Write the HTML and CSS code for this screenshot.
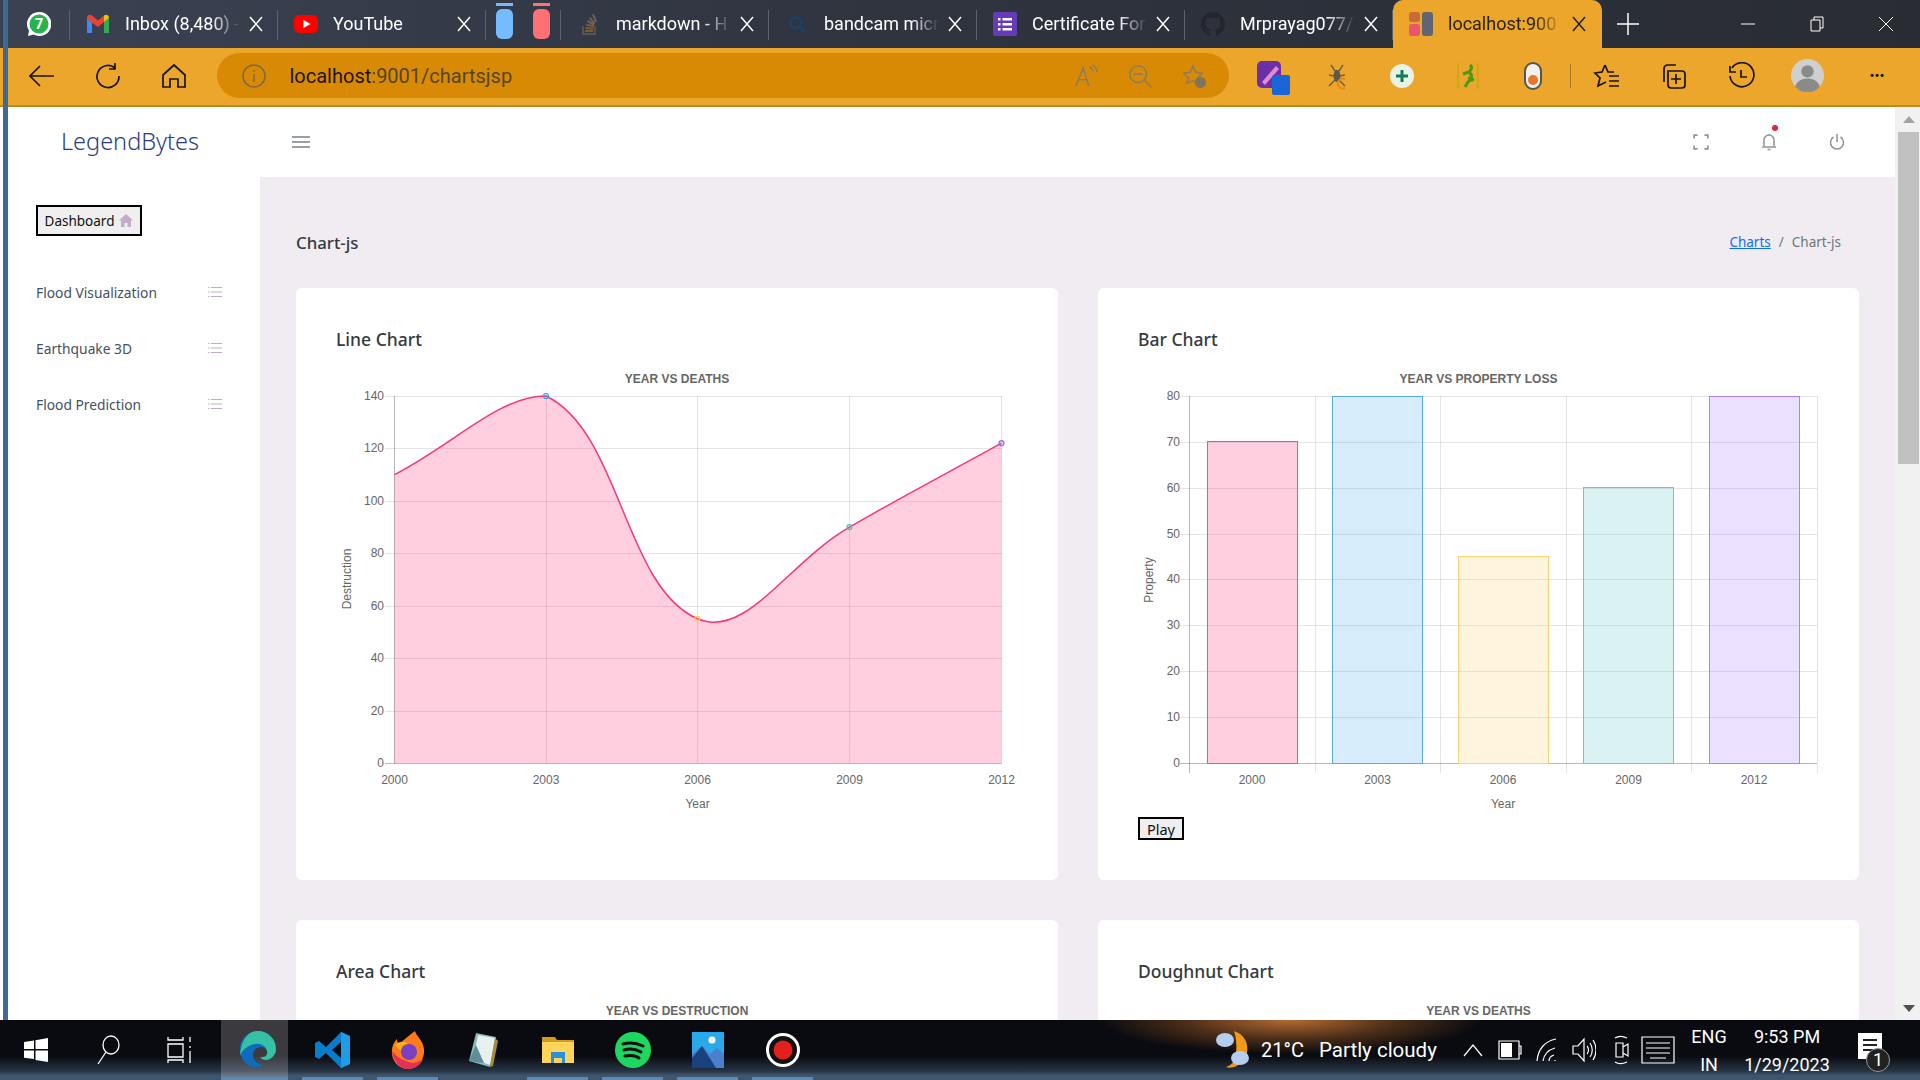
FILE: index.html
```html
<!DOCTYPE html>
<html lang="en">
<head>
    <meta charset="UTF-8">
    <title>localhost:9001/chartsjsp</title>
    <link rel="stylesheet" href="styles.css">
</head>
<body>
<div class="screen">
    <div class="edge-strip"></div>

    <!-- browser tabs -->
    <div class="tabstrip">
        <div class="tab pinned">
            <svg class="tab-icon" viewBox="0 0 24 24"><path fill="#fff" d="M12 0a12 12 0 0 0-10 18.500L1 24l5.600-1.500A12 12 0 1 0 12 0z"/><circle cx="12" cy="12" r="9.500" fill="#25b34a"/><text x="12" y="17" class="wa-num">7</text></svg>
        </div>
        <div class="tab">
            <svg class="tab-icon" viewBox="0 0 24 24"><path fill="#4285f4" d="M1 21V6l5 4v11z"/><path fill="#34a853" d="M18 21V10l5-4v15z"/><path fill="#ea4335" d="M1 6c0-3 3-4 5-2.500l6 5 6-5v6.500l-6 5-11-8z"/><path fill="#fbbc04" d="M18 3.500C20 2 23 3 23 6l-5 4z"/></svg>
            <span class="tab-title">Inbox (8,480) -</span>
            <svg class="tab-close" viewBox="0 0 14 16"><path d="M1 1l12 14M13 1L1 15"/></svg>
        </div>
        <div class="tab">
            <svg class="tab-icon" viewBox="0 0 24 24"><rect y="3" width="24" height="18" rx="5" fill="#f00"/><path fill="#fff" d="M9.500 8l7 4-7 4z"/></svg>
            <span class="tab-title">YouTube</span>
            <svg class="tab-close" viewBox="0 0 14 16"><path d="M1 1l12 14M13 1L1 15"/></svg>
        </div>
        <div class="tab pinned pills">
            <div class="pill pill-blue"></div>
            <div class="pill pill-red"></div>
        </div>
        <div class="tab">
            <svg class="tab-icon" viewBox="0 0 24 24"><path fill="#5c5148" d="M5 14h2v7h10v-7h2v9H5z"/><path fill="#7a5a3c" d="M8 18h8v2H8zM8.500 15l8 .8-.2 2-8-.8zM9.500 11.500l7.700 2.200-.5 1.900-7.700-2.200z"/><path fill="#6d6258" d="M11 8l6.800 4.200-1 1.700-6.800-4.200zM13.500 5l5 6.300-1.600 1.200-5-6.300zM17 2l3 7.400-1.900.8-3-7.400z"/></svg>
            <span class="tab-title">markdown - H</span>
            <svg class="tab-close" viewBox="0 0 14 16"><path d="M1 1l12 14M13 1L1 15"/></svg>
        </div>
        <div class="tab">
            <svg class="tab-icon" viewBox="-4 -4 32 32"><circle cx="10" cy="10" r="7" fill="none" stroke="#17446f" stroke-width="3"/><path d="M15 15l7 7" stroke="#17446f" stroke-width="3.500"/></svg>
            <span class="tab-title">bandcam micr</span>
            <svg class="tab-close" viewBox="0 0 14 16"><path d="M1 1l12 14M13 1L1 15"/></svg>
        </div>
        <div class="tab">
            <svg class="tab-icon" viewBox="0 0 24 24"><rect width="24" height="24" rx="2" fill="#673ab7"/><path fill="#fff" d="M5 6h2.500v2.500H5zM9.500 6H19v2.500H9.500zM5 11h2.500v2.500H5zM9.500 11H19v2.500H9.500zM5 16h2.500v2.500H5zM9.500 16H19v2.500H9.500z"/></svg>
            <span class="tab-title">Certificate For</span>
            <svg class="tab-close" viewBox="0 0 14 16"><path d="M1 1l12 14M13 1L1 15"/></svg>
        </div>
        <div class="tab">
            <svg class="tab-icon" viewBox="0 0 24 24"><path fill="#23262c" d="M12 0a12 12 0 0 0-3.800 23.400c.6.100.8-.3.800-.6v-2.200c-3.300.7-4-1.400-4-1.400-.5-1.400-1.300-1.800-1.300-1.800-1.100-.7.100-.7.100-.7 1.200.1 1.800 1.200 1.800 1.200 1.100 1.800 2.800 1.300 3.500 1 .1-.8.400-1.300.8-1.600-2.700-.3-5.500-1.300-5.500-5.900 0-1.300.5-2.400 1.200-3.200-.1-.3-.5-1.500.1-3.200 0 0 1-.3 3.300 1.200a11.500 11.500 0 0 1 6 0c2.300-1.500 3.300-1.200 3.300-1.200.7 1.700.2 2.900.1 3.200.8.800 1.200 1.900 1.200 3.200 0 4.600-2.800 5.600-5.500 5.900.4.400.8 1.100.8 2.200v3.300c0 .3.200.7.800.6A12 12 0 0 0 12 0z"/></svg>
            <span class="tab-title">Mrprayag077/</span>
            <svg class="tab-close" viewBox="0 0 14 16"><path d="M1 1l12 14M13 1L1 15"/></svg>
        </div>
        <div class="tab active">
            <svg class="tab-icon" viewBox="0 0 24 24"><rect x="0" y="0" width="11" height="10" rx="3" fill="#c96a3a"/><rect x="0" y="12" width="11" height="12" rx="3" fill="#e8556d"/><rect x="13" y="0" width="11" height="24" rx="3" fill="#5f6672"/></svg>
            <span class="tab-title">localhost:900</span>
            <svg class="tab-close" viewBox="0 0 14 16"><path d="M1 1l12 14M13 1L1 15"/></svg>
        </div>
        <div class="tab-new"><svg viewBox="0 0 24 24" width="24" height="24"><path d="M12 1v22M1 12h22"/></svg></div>
        <div class="win-controls">
            <div class="win-btn"><svg viewBox="0 0 16 16" width="16" height="16"><path d="M1 8h14"/></svg></div>
            <div class="win-btn"><svg viewBox="0 0 16 16" width="16" height="16"><path d="M2 4h9v11H2zM5 4V1h9v11h-3"/></svg></div>
            <div class="win-btn"><svg viewBox="0 0 16 16" width="16" height="16"><path d="M1 1l14 14M15 1L1 15"/></svg></div>
        </div>
    </div>

    <!-- browser toolbar -->
    <div class="toolbar">
        <div class="nav-btns">
            <div class="tool-btn"><svg viewBox="0 0 28 28"><path d="M26 14H3M12 4L2 14l10 10"/></svg></div>
            <div class="tool-btn"><svg viewBox="0 0 28 28"><path d="M21 6a11 11 0 1 0 4 8M21 1v6h-6"/></svg></div>
            <div class="tool-btn"><svg viewBox="0 0 28 28"><path d="M3 13L14 3l11 10v12h-7v-8h-8v8H3z"/></svg></div>
        </div>
        <div class="address">
            <svg class="info-icon" viewBox="0 0 26 26"><circle cx="13" cy="13" r="11"/><path d="M13 11v8M13 7v2"/></svg>
            <div class="url"><span class="url-host">localhost</span>:9001/chartsjsp</div>
            <div class="address-btns">
                <div class="tool-btn muted"><svg viewBox="0 0 28 28"><path d="M3 25L11 5l6 20M6 18h9M18 4c2 1 3 3 3 5M21 2c3 2 5 5 5 8"/></svg></div>
                <div class="tool-btn muted"><svg viewBox="0 0 28 28"><circle cx="12" cy="12" r="9"/><path d="M7 12h10M19 19l7 7"/></svg></div>
                <div class="tool-btn muted"><svg viewBox="0 0 28 28"><path d="M13 3l3 7 7 1-5 5 1 6-6-3-7 3 2-6-5-5 7-1z"/><circle class="solid" cx="21" cy="21" r="6"/></svg></div>
            </div>
        </div>
        <div class="ext-btns">
            <div class="ext"><svg viewBox="-5 -4 41 40" width="41" height="40"><rect x="1" y="1" width="24" height="27" rx="5" fill="#6b2fa8"/><path d="M6 22L20 6l3 3L9 25z" fill="#e58ad0"/><rect x="16" y="15" width="18" height="20" rx="2" fill="#1a66d6"/></svg></div>
            <div class="ext"><svg viewBox="0 0 28 28" width="28" height="28"><path d="M8 3l4 6h4l4-6M6 13l5 1M22 13l-5 1M6 24l6-6M22 24l-6-6" stroke="#6b6450" stroke-width="1.500" fill="none"/><ellipse cx="14" cy="14" rx="3.500" ry="6" fill="#5f5a48"/><path d="M22 17a5 5 0 1 0 0 9" stroke="#e58a16" stroke-width="2" fill="none"/></svg></div>
            <div class="ext"><svg viewBox="0 0 26 26" width="26" height="26"><circle cx="13" cy="13" r="12" fill="#e9f2e6"/><path d="M13 7v12M7 13h12" stroke="#0c7c59" stroke-width="3"/></svg></div>
            <div class="ext"><svg viewBox="0 0 26 28" width="26" height="28"><path d="M5 2h-2v24h2M21 2h2v24h-2" stroke="#b5a800" fill="none"/><path d="M15 3c3 2 1 5-1 7 4 3 3 8-1 10l-3 5M14 10l-6 2M13 16l6 2" stroke="#4c9a12" stroke-width="3" fill="none"/></svg></div>
            <div class="ext"><svg viewBox="0 0 20 30" width="20" height="30"><rect x="2" y="2" width="16" height="26" rx="8" fill="#f4efe8" stroke="#555" stroke-width="2"/><circle cx="10" cy="19" r="5" fill="#e8772a"/></svg></div>
        </div>
        <div class="tool-sep"></div>
        <div class="user-btns">
            <div class="tool-btn"><svg viewBox="0 0 28 28"><path d="M12 3l3 7h6M12 3l-3 7-7 1 5 5-2 8 8-4M16 14h10M16 19h10M16 24h10"/></svg></div>
            <div class="tool-btn"><svg viewBox="0 0 28 28"><path d="M4 20V7c0-3 2-4 4-4h8M8 9h14c2 0 3 1 3 3v11c0 2-1 3-3 3H11c-2 0-3-1-3-3zM16 12v10M11 17h10"/></svg></div>
            <div class="tool-btn"><svg viewBox="0 0 28 28"><path d="M5 6a12 12 0 1 1-2 8M3 4v6h6M14 8v7h6"/></svg></div>
            <div class="tool-btn"><svg viewBox="0 0 32 32" class="avatar"><circle cx="16" cy="16" r="16" fill="#cfcfcf"/><circle cx="16" cy="12" r="6" fill="#8a8a8a"/><path d="M4 27c2-6 7-8 12-8s10 2 12 8a16 16 0 0 1-24 0z" fill="#8a8a8a"/></svg></div>
            <div class="tool-btn more">&#8226;&#8226;&#8226;</div>
        </div>
    </div>

    <!-- the page itself -->
    <div class="viewport">
        <div class="page">
            <div class="navbar">
                <div class="brand">LegendBytes</div>
                <svg class="burger" viewBox="0 0 18 12"><path d="M0 1h18M0 6h18M0 11h18"/></svg>
                <div class="nav-icons">
                    <svg class="nav-icon" viewBox="0 0 14 14"><path d="M1 4V1h3M10 1h3v3M13 10v3h-3M4 13H1v-3"/></svg>
                    <div class="bell">
                        <svg class="nav-icon" viewBox="0 0 16 18"><path d="M3 13V7a5 5 0 0 1 10 0v6M1 14h14M6.500 16.500h3M8 1v1"/></svg>
                        <span class="bell-dot"></span>
                    </div>
                    <svg class="nav-icon" viewBox="0 0 16 18"><path d="M8 1v8M4.500 4a6.500 6.500 0 1 0 7 0"/></svg>
                </div>
            </div>
            <div class="layout">
                <aside class="sidebar">
                    <button class="dash-btn">Dashboard
                        <svg viewBox="0 0 14 13" width="14" height="13"><path d="M7 0L0 6.500h2V13h3.500V9h3v4H12V6.500h2z"/></svg>
                    </button>
                    <div class="menu-item">Flood Visualization <svg class="list-icon" viewBox="0 0 14 12"><path d="M3 1.500h11M3 6h11M3 10.500h11M0 1.500h1.500M0 6h1.500M0 10.500h1.500"/></svg></div>
                    <div class="menu-item">Earthquake 3D <svg class="list-icon" viewBox="0 0 14 12"><path d="M3 1.500h11M3 6h11M3 10.500h11M0 1.500h1.500M0 6h1.500M0 10.500h1.500"/></svg></div>
                    <div class="menu-item">Flood Prediction <svg class="list-icon" viewBox="0 0 14 12"><path d="M3 1.500h11M3 6h11M3 10.500h11M0 1.500h1.500M0 6h1.500M0 10.500h1.500"/></svg></div>
                </aside>
                <main class="content">
                    <div class="page-head">
                        <h3>Chart-js</h3>
                        <div class="crumbs"><a href="#">Charts</a><span class="crumb-sep">/</span><span>Chart-js</span></div>
                    </div>
                    <div class="chart-grid">
                        <section class="card">
                            <h4>Line Chart</h4>
                            <div class="chart-title">YEAR VS DEATHS</div>
                            <svg class="chart" viewBox="336 386 682 426" width="682" height="426">
                                <path class="grid" d="M385 396.500H1002M385 448.500H1002M385 501.500H1002M385 553.500H1002M385 606.500H1002M385 658.500H1002M385 711.500H1002M546.500 396V763M697.500 396V763M849.500 396V763M1001.500 396V763"/>
                                <path class="area" d="M394.500 474.600C455.100 443.200 499 396 546 396C620.200 431.300 624.300 587.200 697.500 618.800C745.700 639.600 788 562.600 849.500 527.100C909.600 492.400 940.700 476.800 1001.500 443.200V763H394.500Z"/>
                                <path class="axis" d="M394.500 396V763.500M385 763.500H1002"/>
                                <path class="curve" d="M394.500 474.600C455.100 443.200 499 396 546 396C620.200 431.300 624.300 587.200 697.500 618.800C745.700 639.600 788 562.600 849.500 527.100C909.600 492.400 940.700 476.800 1001.500 443.200"/>
                                <circle class="pt pt-blue" cx="546" cy="396" r="2.500"/>
                                <circle class="pt pt-yellow" cx="697.500" cy="618.800" r="2.500"/>
                                <circle class="pt pt-teal" cx="849.500" cy="527.100" r="2.500"/>
                                <circle class="pt pt-purple" cx="1001.500" cy="443.200" r="2.500"/>
                                <g class="tick-y">
                                    <text x="384" y="400">140</text><text x="384" y="452">120</text><text x="384" y="505">100</text><text x="384" y="557">80</text>
                                    <text x="384" y="610">60</text><text x="384" y="662">40</text><text x="384" y="715">20</text><text x="384" y="767">0</text>
                                </g>
                                <g class="tick-x">
                                    <text x="394.500" y="784">2000</text><text x="546" y="784">2003</text><text x="697.500" y="784">2006</text><text x="849.500" y="784">2009</text><text x="1001.500" y="784">2012</text>
                                    <text x="697.500" y="808">Year</text>
                                </g>
                                <text class="axis-label" transform="translate(351 579) rotate(-90)">Destruction</text>
                            </svg>
                        </section>
                        <section class="card">
                            <h4>Bar Chart</h4>
                            <div class="chart-title">YEAR VS PROPERTY LOSS</div>
                            <svg class="chart" viewBox="1138 386 681 426" width="681" height="426">
                                <path class="grid" d="M1180 396.500H1817M1180 442.500H1817M1180 488.500H1817M1180 534.500H1817M1180 579.500H1817M1180 625.500H1817M1180 671.500H1817M1180 717.500H1817M1315.500 396V773M1440.500 396V773M1566.500 396V773M1691.500 396V773M1817.500 396V773"/>
                                <path class="axis" d="M1189.500 396V773M1180 763.500H1817"/>
                                <rect class="bar bar-pink" x="1207.500" y="441.500" width="90" height="322"/>
                                <rect class="bar bar-blue" x="1332.500" y="396.500" width="90" height="367"/>
                                <rect class="bar bar-yellow" x="1458.500" y="556.500" width="90" height="207"/>
                                <rect class="bar bar-teal" x="1583.500" y="487.500" width="90" height="276"/>
                                <rect class="bar bar-purple" x="1709.500" y="396.500" width="90" height="367"/>
                                <g class="tick-y">
                                    <text x="1180" y="400">80</text><text x="1180" y="446">70</text><text x="1180" y="492">60</text><text x="1180" y="538">50</text><text x="1180" y="583">40</text>
                                    <text x="1180" y="629">30</text><text x="1180" y="675">20</text><text x="1180" y="721">10</text><text x="1180" y="767">0</text>
                                </g>
                                <g class="tick-x">
                                    <text x="1252" y="784">2000</text><text x="1377.500" y="784">2003</text><text x="1503" y="784">2006</text><text x="1628.500" y="784">2009</text><text x="1754" y="784">2012</text>
                                    <text x="1503" y="808">Year</text>
                                </g>
                                <text class="axis-label" transform="translate(1153 580) rotate(-90)">Property</text>
                            </svg>
                            <button class="play-btn">Play</button>
                        </section>
                        <section class="card">
                            <h4>Area Chart</h4>
                            <div class="chart-title">YEAR VS DESTRUCTION</div>
                        </section>
                        <section class="card">
                            <h4>Doughnut Chart</h4>
                            <div class="chart-title">YEAR VS DEATHS</div>
                        </section>
                    </div>
                </main>
            </div>
        </div>
        <div class="scrollbar">
            <div class="arrow-up"></div>
            <div class="thumb"></div>
            <div class="arrow-down"></div>
        </div>
    </div>

    <!-- windows taskbar -->
    <div class="taskbar">
        <div class="tb-app"><svg viewBox="0 0 24 24" width="24" height="24"><path fill="#fff" d="M0 4l10-1.500V11H0zM11.500 2.300L24 0v11H11.500zM0 12.500h10V21L0 19.700zM11.500 12.500H24V24l-12.500-2z"/></svg></div>
        <div class="tb-app"><svg viewBox="0 0 26 30" width="26" height="30" class="tb-line"><ellipse cx="16" cy="10" rx="8" ry="9"/><path d="M11 17L3 29"/></svg></div>
        <div class="tb-app"><svg viewBox="0 0 26 28" width="26" height="28" class="tb-line"><path d="M1 1v3h15V1M1 8h15v13H1zM1 27v-3h15v3M23 1v5M23 10v2M23 15v12"/></svg></div>
        <div class="tb-app tb-edge running"><svg viewBox="0 0 36 36" width="36" height="36"><path fill="#0f6cbd" d="M18 0C8 0 0 8 0 18c0 10 6 18 16 18 3 0 6-1 8-2-6 0-11-4-11-10 0-5 4-8 8-8 3 0 6 2 6 5l9 1C36 9 28 0 18 0z"/><path fill="#34c1a5" d="M18 0c9 0 18 7 18 18 0 6-5 11-10 11-3 0-5-1-6-3 5 1 8-2 7-6-1-5-6-8-12-7-7 1-13 6-15 12C1 9 8 0 18 0z"/></svg></div>
        <div class="tb-app running"><svg viewBox="0 0 36 36" width="36" height="36"><path fill="#0a7ccb" fill-rule="evenodd" d="M26 0l9 4v28l-9 4L11 21l-7 6-4-2V11l4-2 7 6zM26 10l-9 8 9 8z"/><path fill="#1f9ce6" d="M26 0l9 4v28l-9 4z"/></svg></div>
        <div class="tb-app running"><svg viewBox="0 0 34 38" width="34" height="38"><path fill="#ff7a1a" d="M24 0c1 5 8 9 9 18 1 11-7 20-16 20S0 30 1 20C1 14 4 10 6 8c0 3 1 5 3 6 2-5 8-8 15-14z"/><path fill="#e5305a" d="M1 20c1 10 8 18 16 18 7 0 13-4 15-10-5 4-11 5-17 2-6-2-11-6-14-10z"/><circle cx="18" cy="21" r="8" fill="#7a3fc2"/><path fill="#ffb01f" d="M4 14c4-4 10-4 13-1-5 0-7 3-7 6-3-1-5-3-6-5z"/></svg></div>
        <div class="tb-app"><svg viewBox="0 0 32 38" width="32" height="38"><path fill="#8ab7b8" d="M9 2L29 6 23 36 2 30z"/><path fill="#e8f0f0" d="M11 4l17 3-5 27L6 28z"/><path fill="#5e8f98" d="M2 30L9 14l8 18z"/><path fill="#a88c3c" d="M28 7l3 3-5 25-3 1z"/></svg></div>
        <div class="tb-app running"><svg viewBox="0 0 32 30" width="32" height="30"><path fill="#d39a1b" d="M0 2h13l2 3h17v4H0z"/><path fill="#ffd45a" d="M0 7h32v21H0z"/><path fill="#2d8fd5" d="M9 17h14v11h-3v-5h-8v5H9z"/></svg></div>
        <div class="tb-app running"><svg viewBox="0 0 36 36" width="36" height="36"><circle cx="18" cy="18" r="18" fill="#1ed760"/><path d="M8 12c7-2 14-1 20 2M9 18c6-2 12-1 17 2M10 24c5-1 10-1 14 2" fill="none" stroke="#111" stroke-width="3" stroke-linecap="round"/></svg></div>
        <div class="tb-app running"><svg viewBox="0 0 32 36" width="32" height="36"><rect width="32" height="36" fill="#29a8ea"/><path fill="#4a80cc" d="M0 36V22l10-8 8 8 7-6 7 6v14z"/><path fill="#18427e" d="M0 36V26l10-12 14 22z"/><circle cx="20" cy="8" r="3.500" fill="#fff"/></svg></div>
        <div class="tb-app running"><svg viewBox="0 0 34 34" width="34" height="34"><circle cx="17" cy="17" r="15.500" fill="#111" stroke="#fff" stroke-width="3"/><circle cx="17" cy="17" r="9.500" fill="#e4201c"/></svg></div>

        <div class="tray">
            <svg class="weather-icon" viewBox="0 0 34 40" width="34" height="40"><path fill="#f09a1c" d="M18 1c10 3 15 12 13 22-2 9-12 17-21 14 7-2 9-7 10-14 1-8 0-16-2-22z"/><ellipse cx="9" cy="10" rx="9" ry="7" fill="#b5cdf0"/><ellipse cx="24" cy="28" rx="9" ry="7" fill="#b5cdf0"/></svg>
            <span class="temp">21°C</span>
            <span class="forecast">Partly cloudy</span>
            <div class="tray-icon"><svg viewBox="0 0 20 14" width="20" height="14"><path d="M1 13l9-11 9 11"/></svg></div>
            <div class="tray-icon"><svg viewBox="0 0 24 22" width="24" height="22"><path d="M1 2h20v18H1zM21 7h2v8h-2z"/><path class="solid" d="M3 4h11v14H3z"/></svg></div>
            <div class="tray-icon"><svg viewBox="0 0 22 24" width="22" height="24"><path d="M1 23C2 11 9 3 20 1M7 23c1-7 5-11 12-13M13 23c0-3 2-5 5-6M19 22v1"/></svg></div>
            <div class="tray-icon"><svg viewBox="0 0 24 26" width="24" height="26"><path d="M1 9h5l6-7v22l-6-7H1zM15 9c2 2 2 6 0 8M18 6c3 4 3 10 0 14M21 3c4 6 4 14 0 20"/></svg></div>
            <div class="tray-icon"><svg viewBox="0 0 16 30" width="16" height="30"><path d="M3 8h7v14H3zM10 12l5-3v12l-5-3M2 3c3-2 8-2 12 0M2 27c3 2 8 2 12 0"/></svg></div>
            <div class="tray-icon"><svg viewBox="0 0 34 28" width="34" height="28"><path d="M1 1h32v26H1zM5 7h24M5 12h24M5 17h24M9 22h16"/></svg></div>
            <div class="tray-lang"><span>ENG</span><span>IN</span></div>
            <div class="tray-clock"><span>9:53 PM</span><span>1/29/2023</span></div>
            <div class="tray-notify">
                <svg viewBox="0 0 26 34" width="26" height="34"><path fill="#fff" d="M1 0h24v26H14l-2 7-3-7H1z"/><path d="M6 7h14M6 12h14M6 17h10" stroke="#222" stroke-width="2"/></svg>
                <span class="notify-badge">1</span>
            </div>
        </div>
    </div>
</div>
</body>
</html>
```

FILE: styles.css
```css
* {
    margin: 0;
    padding: 0;
    box-sizing: border-box;
}

html, body {
    height: 100%;
    overflow: hidden;
}

.screen {
    position: relative;
    width: 1920px;
    height: 1080px;
    display: flex;
    flex-direction: column;
    overflow: hidden;
    background: #fff;
    font-family: "Noto Sans", sans-serif;
}

.edge-strip {
    position: absolute;
    left: 3px;
    top: 0;
    width: 5px;
    height: 1020px;
    background: #3f6a95;
    z-index: 5;
}

/* tabs */
.tabstrip {
    height: 48px;
    flex: none;
    display: flex;
    padding-left: 8px;
    background: linear-gradient(90deg, #3a4252, #2f343f 45%, #292c33);
    font-family: "Roboto", sans-serif;
    color: #fff;
}

.tab {
    position: relative;
    width: 208px;
    height: 48px;
    display: flex;
    align-items: center;
    padding-left: 16px;
}

.tab::after {
    content: "";
    position: absolute;
    right: 0;
    top: 10px;
    bottom: 8px;
    width: 1px;
    background: #5d636e;
}

.tab.pinned {
    width: 62px;
    padding-left: 19px;
}

.tab.pills {
    width: 75px;
    padding-left: 10px;
    gap: 20px;
    align-items: flex-start;
}

.pill {
    position: relative;
    width: 17px;
    height: 30px;
    margin-top: 9px;
    border-radius: 6px;
}

.pill::before {
    content: "";
    position: absolute;
    left: 0;
    right: 0;
    top: -6px;
    height: 3px;
}

.pill-blue { background: #74bcff; }
.pill-red { background: #ff6f76; }
.pill-blue::before { background: #74bcff; }
.pill-red::before { background: #ff6f76; }

.tab-icon {
    width: 24px;
    height: 24px;
    flex: none;
}

.tab-title {
    width: 120px;
    margin: -2px 0 0 15px;
    font-size: 18px;
    white-space: nowrap;
    flex: none;
    -webkit-mask-image: linear-gradient(90deg, #000 72%, transparent 96%);
    mask-image: linear-gradient(90deg, #000 72%, transparent 96%);
}

.tab-close {
    width: 14px;
    height: 16px;
    margin-left: 4px;
    flex: none;
    fill: none;
    stroke: #fff;
    stroke-width: 1.5;
}

.tab.active {
    background: #eca62b;
    border-radius: 10px 10px 0 0;
    color: #2b2410;
    width: 209px;
}

.tab.active::after { display: none; }
.tab.active .tab-close { stroke: #222; }

.tab-new {
    width: 52px;
    display: flex;
    align-items: center;
    justify-content: center;
}

.tab-new path, .win-btn path {
    fill: none;
    stroke: #fff;
    stroke-width: 1.5;
}

.win-controls {
    margin-left: auto;
    display: flex;
}

.win-btn {
    width: 69px;
    display: flex;
    align-items: center;
    justify-content: center;
}

.win-btn path { stroke-width: 1; }

/* toolbar */
.toolbar {
    height: 59px;
    flex: none;
    display: flex;
    align-items: center;
    padding: 0 0 2px 8.500px;
    background: #eca62b;
    border-bottom: 2px solid #b98a2c;
    font-family: "Roboto", sans-serif;
}

.nav-btns, .ext-btns, .user-btns, .address-btns {
    display: flex;
}

.tool-btn {
    width: 66px;
    height: 40px;
    display: flex;
    align-items: center;
    justify-content: center;
}

.tool-btn svg {
    width: 28px;
    height: 28px;
    fill: none;
    stroke: #151515;
    stroke-width: 1.700;
}

.address {
    width: 1012px;
    height: 45px;
    margin-left: 10px;
    display: flex;
    align-items: center;
    padding: 0 8px 0 24px;
    border-radius: 23px;
    background: #d98a05;
}

.info-icon {
    width: 26px;
    height: 26px;
    fill: none;
    stroke: #7e6a3e;
    stroke-width: 1.500;
}

.url {
    margin-left: 23px;
    font-size: 20px;
    color: #54451f;
}

.url-host { color: #1d1605; }

.address-btns { margin-left: auto; }

.tool-btn.muted { width: 54px; }

.tool-btn.muted svg {
    stroke: #8f7d58;
    width: 26px;
    height: 26px;
}

.tool-btn.muted .solid {
    fill: #7d7560;
    stroke: none;
}

.ext-btns { margin-left: 10px; }

.ext {
    width: 65.500px;
    display: flex;
    justify-content: center;
    align-items: center;
}

.tool-sep {
    width: 1px;
    height: 24px;
    margin: 0 2px 0 4px;
    background: #a37a2a;
}

.user-btns .tool-btn { width: 67px; }

.tool-btn svg.avatar {
    width: 33px;
    height: 33px;
    stroke: none;
}

.tool-btn.more {
    padding-left: 5px;
    font-size: 15px;
    letter-spacing: 0;
    color: #111;
}

/* page */
.viewport {
    flex: 1;
    min-height: 0;
    display: flex;
}

.page {
    width: 1895px;
    display: flex;
    flex-direction: column;
}

.navbar {
    height: 70px;
    flex: none;
    display: flex;
    align-items: center;
    padding-left: 61px;
}

.brand {
    width: 231px;
    margin-top: -3px;
    font-size: 23.500px;
    font-weight: 300;
    color: #2c3e7e;
}

.burger {
    width: 18px;
    height: 12px;
    fill: none;
    stroke: #9a9fa5;
    stroke-width: 2;
}

.nav-icons {
    margin-left: auto;
    margin-right: 50px;
    display: flex;
    align-items: center;
    gap: 52px;
}

.nav-icon {
    width: 16px;
    height: 18px;
    display: block;
    fill: none;
    stroke: #8f9498;
    stroke-width: 1.500;
}

.bell { position: relative; }

.bell-dot {
    position: absolute;
    right: -1px;
    top: -8px;
    width: 6px;
    height: 6px;
    border-radius: 50%;
    background: #e3223c;
}

.layout {
    flex: 1;
    min-height: 0;
    display: flex;
}

.sidebar {
    width: 260px;
    flex: none;
    padding: 28px 38px 0 36px;
}

.dash-btn {
    height: 31px;
    width: 106px;
    margin-bottom: 28px;
    display: flex;
    align-items: center;
    justify-content: center;
    gap: 5px;
    border: 2px solid #000;
    background: #efefef;
    font-family: "Noto Sans", sans-serif;
    font-size: 13.500px;
    color: #111;
}

.dash-btn svg { fill: #c3acc9; }

.menu-item {
    height: 56px;
    display: flex;
    align-items: center;
    justify-content: space-between;
    font-size: 13.800px;
    color: #46505f;
}

.list-icon {
    width: 14px;
    height: 12px;
    fill: none;
    stroke: #c3a9c8;
    stroke-width: 1.200;
}

.content {
    flex: 1;
    min-width: 0;
    padding: 53px 36px 0;
    background: #f0ecf2;
    overflow: hidden;
}

.page-head {
    height: 24px;
    margin-bottom: 34px;
    display: flex;
    align-items: center;
    justify-content: space-between;
}

.page-head h3 {
    font-size: 16.800px;
    font-weight: 500;
    color: #343a40;
}

.crumbs {
    font-size: 13.500px;
    color: #6c757d;
    padding-right: 18px;
}

.crumbs a { color: #0d6efd; }
.crumb-sep { margin: 0 8px; }

.chart-grid {
    display: grid;
    grid-template-columns: 1fr 1fr;
    gap: 40px;
}

.card {
    padding: 40px;
    background: #fff;
    border-radius: 6px;
}

.card h4 {
    font-size: 17.500px;
    line-height: 22px;
    font-weight: 500;
    color: #343a40;
    margin-bottom: 22px;
}

.chart-title {
    font-family: "Liberation Sans", sans-serif;
    font-size: 12px;
    line-height: 14px;
    font-weight: 700;
    text-align: center;
    color: #666;
}

.chart {
    display: block;
    font-family: "Liberation Sans", sans-serif;
    font-size: 12px;
    fill: #666;
}

.grid {
    fill: none;
    stroke: rgba(0, 0, 0, .1);
}

.axis {
    fill: none;
    stroke: rgba(0, 0, 0, .28);
}

.area { fill: rgba(255, 64, 129, .25); }

.curve {
    fill: none;
    stroke: #f8357a;
    stroke-width: 1.500;
}

.pt { stroke-width: 1.200; }
.pt-blue { stroke: #36a2eb; fill: rgba(54, 162, 235, .2); }
.pt-yellow { stroke: #ffcd56; fill: rgba(255, 205, 86, .2); }
.pt-teal { stroke: #4bc0c0; fill: rgba(75, 192, 192, .2); }
.pt-purple { stroke: #9966ff; fill: rgba(153, 102, 255, .2); }

.tick-y { text-anchor: end; }
.tick-x { text-anchor: middle; }
.axis-label { text-anchor: middle; }

.bar-pink { fill: rgba(255, 64, 129, .25); stroke: #f8508c; }
.bar-blue { fill: rgba(54, 162, 235, .2); stroke: #58ade9; }
.bar-yellow { fill: rgba(255, 205, 86, .2); stroke: #fcd272; }
.bar-teal { fill: rgba(75, 192, 192, .2); stroke: #6cc8c8; }
.bar-purple { fill: rgba(153, 102, 255, .2); stroke: #a881f5; }

.play-btn {
    display: block;
    width: 46px;
    height: 23px;
    margin-top: 5px;
    border: 2px solid #000;
    background: #efefef;
    font-family: "Noto Sans", sans-serif;
    font-size: 14.500px;
    line-height: 18px;
    color: #111;
}

.scrollbar {
    width: 25px;
    flex: none;
    display: flex;
    flex-direction: column;
    align-items: center;
    padding-left: 2px;
    background: #f1f1f1;
}

.arrow-up {
    margin: 9px 0 9px;
    border: 6px solid transparent;
    border-top: 0;
    border-bottom: 7px solid #a3a3a3;
}

.thumb {
    width: 21px;
    height: 332px;
    background: #c1c1c1;
}

.arrow-down {
    margin-top: auto;
    margin-bottom: 8px;
    border: 6px solid transparent;
    border-bottom: 0;
    border-top: 7px solid #505050;
}

/* taskbar */
.taskbar {
    height: 60px;
    flex: none;
    display: flex;
    align-items: center;
    font-family: "Roboto", sans-serif;
    color: #fff;
    background:
        linear-gradient(180deg, transparent 60%, rgba(62, 85, 110, .55) 85%, #3e556e 92%),
        radial-gradient(ellipse 190px 34px at 1290px 0, rgba(190, 112, 50, .95), rgba(120, 70, 30, .6) 55%, transparent),
        #0a0b10;
}

.tb-app {
    position: relative;
    width: 75px;
    height: 60px;
    flex: none;
    display: flex;
    align-items: center;
    justify-content: center;
}

.tb-app:nth-child(-n+3) { width: 72px; }

.tb-edge {
    width: 67px;
    margin: 0 7px 0 5px;
    background: rgba(255, 255, 255, .2);
}

.tb-edge svg { margin: -2px 0 0 6px; }

.running::after {
    content: "";
    position: absolute;
    left: 7px;
    right: 7px;
    bottom: 0;
    height: 3px;
    background: #5b8ab5;
}

.tb-edge.running::after { left: 0; right: 0; }

.tb-line {
    fill: none;
    stroke: #fff;
    stroke-width: 1.300;
}

.tray {
    margin-left: auto;
    padding-right: 20px;
    display: flex;
    align-items: center;
}

.weather-icon { margin-right: 13px; transform: translateX(2px); }

.temp {
    width: 58px;
    font-size: 20px;
}

.forecast {
    width: 135px;
    font-size: 20.500px;
    white-space: nowrap;
}

.tray-icon {
    width: 37px;
    display: flex;
    justify-content: center;
}

.tray-icon svg {
    fill: none;
    stroke: #fff;
    stroke-width: 1.200;
}

.tray-icon .solid {
    fill: #fff;
    stroke: none;
}

.tray-lang, .tray-clock {
    display: flex;
    flex-direction: column;
    align-items: center;
    gap: 8px;
    padding-top: 1px;
    font-size: 18px;
    line-height: 20px;
}

.tray-lang {
    width: 40px;
    margin-left: 13px;
}

.tray-clock {
    width: 100px;
    margin-left: 8px;
}

.tray-notify {
    position: relative;
    width: 60px;
    margin-left: 3px;
    display: flex;
    justify-content: center;
}

.notify-badge {
    position: absolute;
    right: 10px;
    bottom: -5px;
    width: 24px;
    height: 24px;
    border: 1px solid #999;
    border-radius: 50%;
    background: #222;
    font-size: 18px;
    line-height: 22px;
    text-align: center;
}

.wa-num {
    font-family: "Roboto", sans-serif;
    font-size: 15px;
    font-weight: 700;
    fill: #fff;
    text-anchor: middle;
}
```
